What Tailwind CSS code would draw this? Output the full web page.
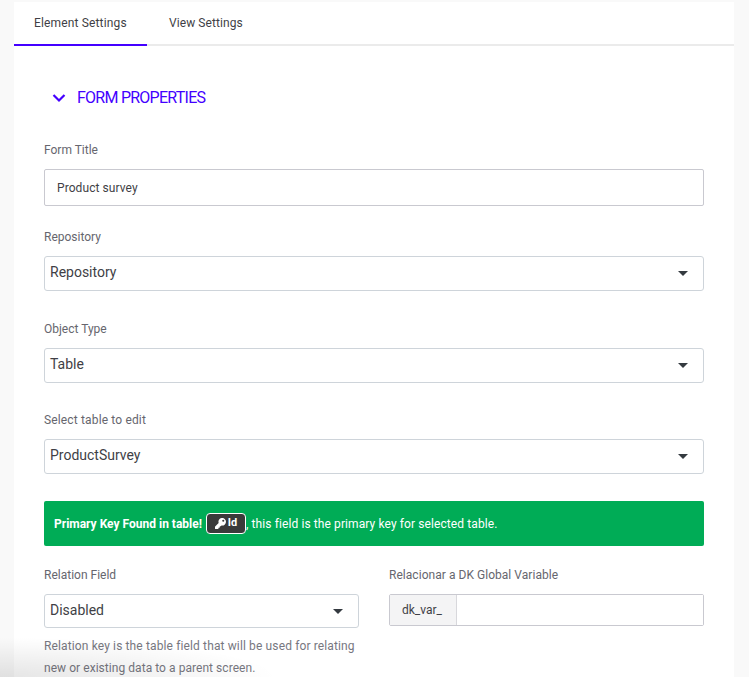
<!DOCTYPE html>
<html lang="en">
<head>
  <meta charset="UTF-8" />
  <title>Form Properties</title>
  <script src="https://cdn.jsdelivr.net/npm/@tailwindcss/browser@4"></script>
</head>
<body class="bg-[#f9f9f9] h-[677px] overflow-hidden font-['Roboto',sans-serif] text-[#3f3f46]">
  <div class="relative h-[677px] overflow-hidden pt-[2px] pl-[14px] pr-[15px]">
    <div class="bg-white h-[675px]">
      <div class="flex h-[44px] border-b-2 border-[#ebebeb]">
        <div class="w-[133px] h-[44px] border-b-2 border-[#4400ff] pl-[20px] pt-[13px] text-[12px] leading-[16px] tracking-[0.15px]">Element Settings</div>
        <div class="pl-[22px] pt-[13px] text-[12px] leading-[16px] tracking-[0.08px]">View Settings</div>
      </div>

      <div class="px-[30px]">
        <div class="flex items-center h-[24px] mt-[40px] pl-[8px] gap-[11px] text-[#4400ff]">
          <svg class="w-[14px] h-[10px]" viewBox="0 0 14 10" fill="none" stroke="currentColor" stroke-width="2.2"><path d="M1.5 2 7 7.5 12.5 2" /></svg>
          <span class="text-[16px] leading-[24px] tracking-[-0.75px]">FORM PROPERTIES</span>
        </div>

        <div class="mt-[32px] text-[12px] leading-[16px] text-[#66666e]">Form Title</div>
        <div class="mt-[11px] h-[37px] border border-[#c9c9d0] rounded-[2px] pl-[12px] flex items-center text-[12px] tracking-[0.08px]">Product survey</div>

        <div class="mt-[23px] text-[12px] leading-[16px] text-[#66666e]">Repository</div>
        <div class="mt-[11px] h-[35px] border border-[#ced4da] rounded-[3px] pl-[5px] pr-[15px] pb-[2px] flex items-center justify-between text-[14px]">
          <span>Repository</span>
          <svg class="w-[10px] h-[5px] mt-[2px]" viewBox="0 0 10 5"><path d="M0 0h10L5 5z" fill="#343a40" /></svg>
        </div>

        <div class="mt-[30px] text-[12px] leading-[16px] text-[#66666e]">Object Type</div>
        <div class="mt-[11px] h-[35px] border border-[#ced4da] rounded-[3px] pl-[5px] pr-[15px] pb-[2px] flex items-center justify-between text-[14px]">
          <span>Table</span>
          <svg class="w-[10px] h-[5px] mt-[2px]" viewBox="0 0 10 5"><path d="M0 0h10L5 5z" fill="#343a40" /></svg>
        </div>

        <div class="mt-[29px] text-[12px] leading-[16px] text-[#66666e] tracking-[0.15px]">Select table to edit</div>
        <div class="mt-[11px] h-[35px] border border-[#ced4da] rounded-[3px] pl-[5px] pr-[15px] pb-[2px] flex items-center justify-between text-[14px]">
          <span>ProductSurvey</span>
          <svg class="w-[10px] h-[5px] mt-[2px]" viewBox="0 0 10 5"><path d="M0 0h10L5 5z" fill="#343a40" /></svg>
        </div>

        <div class="mt-[27px] h-[45px] bg-[#00ac56] rounded-[2px] pl-[10px] flex items-center text-white text-[12px]">
          <span class="font-bold">Primary Key Found in table!</span>
          <span class="ml-[4px] w-[40px] h-[21px] bg-[#3a3a3a] border border-white rounded-[4px] flex items-center justify-center gap-[2px] font-bold text-[11px]">
            <svg class="w-[11px] h-[11px]" viewBox="0 0 512 512" fill="white"><path d="M512 176a176 176 0 0 1-209 173l-24 27a24 24 0 0 1-18 8h-37v40a24 24 0 0 1-24 24h-40v40a24 24 0 0 1-24 24H24a24 24 0 0 1-24-24v-78a24 24 0 0 1 7-17l162-162A176 176 0 1 1 512 176zm-176-48a48 48 0 1 0 96 0 48 48 0 0 0-96 0z" /></svg>Id</span>
          <span class="tracking-[0.1px]">, this field is the primary key for selected table.</span>
        </div>

        <div class="grid grid-cols-2 gap-x-[30px] mt-[21px]">
          <div>
            <div class="text-[12px] leading-[16px] text-[#66666e]">Relation Field</div>
            <div class="mt-[11px] h-[34px] border border-[#ced4da] rounded-[3px] pl-[5px] pr-[15px] pb-[2px] flex items-center justify-between text-[14px]">
              <span>Disabled</span>
              <svg class="w-[10px] h-[5px] mt-[2px]" viewBox="0 0 10 5"><path d="M0 0h10L5 5z" fill="#343a40" /></svg>
            </div>
            <p class="mt-[7px] text-[12px] leading-[22px] text-[#77777f] tracking-[0.13px]">Relation key is the table field that will be used for relating <span class="tracking-[0.05px]">new or existing data to a parent screen.</span></p>
          </div>
          <div>
            <div class="text-[12px] leading-[16px] text-[#66666e] tracking-[0.04px]">Relacionar a DK Global Variable</div>
            <div class="mt-[11px] h-[32px] border border-[#c9c9d0] rounded-[2px] flex text-[12px]">
              <div class="w-[67px] bg-[#f4f4f5] border-r border-[#d8d8dc] pl-[12px] flex items-center">dk_var_</div>
              <div class="flex-1 bg-white"></div>
            </div>
          </div>
        </div>
      </div>
    </div>
    <div class="absolute left-0 bottom-0 w-[280px] h-[40px] bg-[radial-gradient(ellipse_at_bottom_left,rgba(0,0,0,0.1),transparent_70%)]"></div>
  </div>
</body>
</html>
